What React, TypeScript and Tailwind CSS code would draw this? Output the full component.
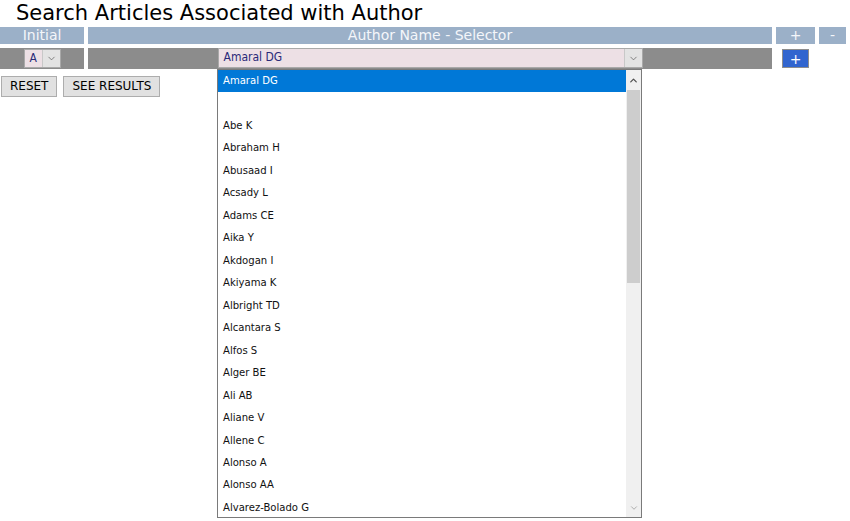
import { ChevronDown, ChevronUp } from 'lucide-react';

const authors = [
  'Amaral DG',
  '',
  'Abe K',
  'Abraham H',
  'Abusaad I',
  'Acsady L',
  'Adams CE',
  'Aika Y',
  'Akdogan I',
  'Akiyama K',
  'Albright TD',
  'Alcantara S',
  'Alfos S',
  'Alger BE',
  'Ali AB',
  'Aliane V',
  'Allene C',
  'Alonso A',
  'Alonso AA',
  'Alvarez-Bolado G',
];

function Select({ value, className }: { value: string; className: string }) {
  return (
    <div className={`flex items-stretch bg-[#ede0e5] border border-[#a9a9a9] ${className}`}>
      <span className="flex-1 pl-[5px] font-['DejaVu_Sans_Condensed',sans-serif] text-[12px] leading-[17px] text-[#2a2a78]">
        {value}
      </span>
      <span className="w-[18px] flex items-center justify-center bg-[#e3e3e3] border-l border-[#c8c8c8]">
        <ChevronDown size={11} strokeWidth={1.5} className="text-[#555]" />
      </span>
    </div>
  );
}

export default function App() {
  return (
    <div className="relative w-[850px] h-[521px] bg-white overflow-hidden font-['DejaVu_Sans',sans-serif] text-black">
      <h1 className="pl-4 text-[21px] leading-[27px] h-[27px]">Search Articles Associated with Author</h1>

      <div className="flex gap-1 h-[17px] text-[14px] leading-[17px] text-[#f4f6fa]">
        <div className="w-[84px] bg-[#9bb0c8] text-center">Initial</div>
        <div className="w-[684px] bg-[#9bb0c8] text-center">Author Name - Selector</div>
        <div className="w-[39px] bg-[#9bb0c8] text-center">+</div>
        <div className="w-[27px] bg-[#9bb0c8] text-center">-</div>
      </div>

      <div className="flex gap-1 h-[21px] mt-1">
        <div className="w-[84px] bg-[#8c8c8c] flex items-center justify-center">
          <Select value="A" className="w-[37px] h-[19px]" />
        </div>
        <div className="w-[684px] bg-[#8c8c8c] flex items-center justify-center">
          <Select value="Amaral DG" className="w-[425px] h-[20px] -mt-px" />
        </div>
        <div className="w-[39px] flex items-center justify-center">
          <button className="w-[27px] h-[19px] bg-[#3165cf] border border-[#8d8d8d] text-white text-[14px] leading-[16px]">+</button>
        </div>
        <div className="w-[27px]" />
      </div>

      <div className="flex gap-[6px] mt-[7px] pl-[1px]">
        <button className="h-[21px] px-2 bg-[#e1e1e1] border border-[#adadad] text-[12px] leading-[19px]">RESET</button>
        <button className="h-[21px] px-2 bg-[#e1e1e1] border border-[#adadad] text-[12px] leading-[19px]">SEE RESULTS</button>
      </div>

      <div className="absolute left-[217px] top-[69px] w-[425px] h-[449px] bg-white border border-[#7a7a7a] flex">
        <ul className="flex-1 font-['DejaVu_Sans_Condensed',sans-serif] text-[11.2px]">
          {authors.map((a, i) => (
            <li
              key={i}
              className={`h-[22.47px] leading-[22px] pl-[5px] ${i === 0 ? 'bg-[#0078d7] text-white' : 'text-[#111]'}`}
            >
              {a}
            </li>
          ))}
        </ul>
        <div className="w-[15px] bg-[#f0f0f0] flex flex-col">
          <div className="h-[20px] flex items-center justify-center">
            <ChevronUp size={11} strokeWidth={2.75} className="text-[#505050]" />
          </div>
          <div className="h-[193px] mx-[1px] bg-[#cdcdcd]" />
          <div className="flex-1" />
          <div className="h-[18px] flex items-center justify-center">
            <ChevronDown size={10} strokeWidth={2} className="text-[#a0a0a0]" />
          </div>
        </div>
      </div>
    </div>
  );
}
